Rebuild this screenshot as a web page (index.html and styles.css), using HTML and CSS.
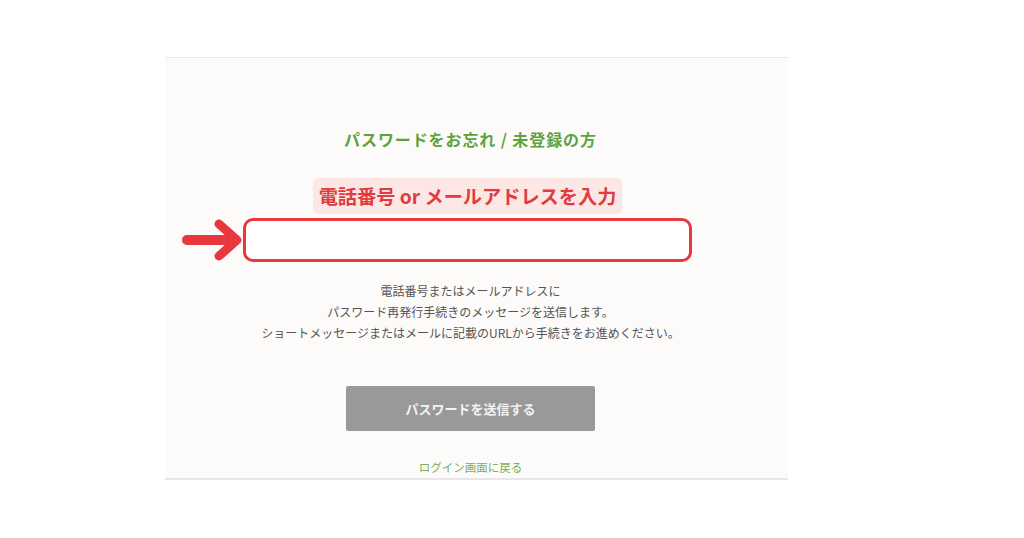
FILE: index.html
```html
<!DOCTYPE html>
<html lang="ja">
<head>
  <meta charset="UTF-8">
  <title>パスワードをお忘れ / 未登録の方</title>
  <link rel="stylesheet" href="styles.css">
</head>
<body>

  <div class="panel">
    <form class="reset-form" novalidate>
      <h2 class="title">パスワードをお忘れ / 未登録の方</h2>

      <div class="hint">電話番号 or メールアドレスを入力</div>

      <div class="field">
        <svg class="arrow" width="64" height="44" viewBox="0 0 64 44">
          <line x1="7" y1="22" x2="54" y2="22" stroke="#e8383d" stroke-width="10" stroke-linecap="round" />
          <polyline points="39,6 57,22 39,38" fill="none" stroke="#e8383d" stroke-width="9" stroke-linecap="round" stroke-linejoin="round" />
        </svg>
        <input type="text" id="account" />
      </div>

      <p class="note">
        電話番号またはメールアドレスに<br>
        パスワード再発行手続きのメッセージを送信します。<br>
        ショートメッセージまたはメールに記載のURLから手続きをお進めください。
      </p>

      <button type="submit" class="send">パスワードを送信する</button>

      <a href="#" class="back">ログイン画面に戻る</a>
    </form>
  </div>

</body>
</html>
```

FILE: styles.css
```css
body {
  margin: 0;
  padding-top: 57px;
  background: #fff;
  font-family: "Noto Sans CJK JP", "Noto Sans", sans-serif;
}

.panel {
  width: 623px;
  margin-left: 165px;
  background: #fcfbf9;
  border-top: 1px solid #e9e9e7;
  border-bottom: 2px solid #e6e6e4;
  box-sizing: border-box;
  height: 423px;
}

.reset-form {
  display: flex;
  flex-direction: column;
  align-items: center;
  padding: 69px 12px 0 0;
}

.title {
  margin: 0;
  font-size: 16px;
  line-height: 24px;
  font-weight: bold;
  letter-spacing: 0.9px;
  color: #5ea23e;
}

.hint {
  margin-top: 27px;
  margin-left: -6px;
  padding: 0 6px;
  height: 36px;
  line-height: 36px;
  border-radius: 6px;
  background: #fce7e5;
  color: #e03b3f;
  font-size: 19.2px;
  font-weight: bold;
}

.field {
  position: relative;
  margin-top: 4px;
  margin-left: -6px;
}

.field input {
  display: block;
  width: 449px;
  height: 44px;
  box-sizing: border-box;
  border: 3px solid #e8383d;
  border-radius: 10px;
  background: #fff;
}

.field input:focus {
  outline: none;
}

.arrow {
  position: absolute;
  left: -63px;
  top: 0;
}

.note {
  margin: 18px 0 0;
  font-size: 12px;
  line-height: 21px;
  color: #555;
  text-align: center;
}

.send {
  margin-top: 43px;
  width: 249px;
  height: 45px;
  border: none;
  border-radius: 2px;
  background: #999;
  color: #f2f2f2;
  font-family: inherit;
  font-size: 13px;
  font-weight: bold;
}

.back {
  margin-top: 27px;
  font-size: 11.5px;
  line-height: 18px;
  color: #7aae58;
  text-decoration: none;
}
```
